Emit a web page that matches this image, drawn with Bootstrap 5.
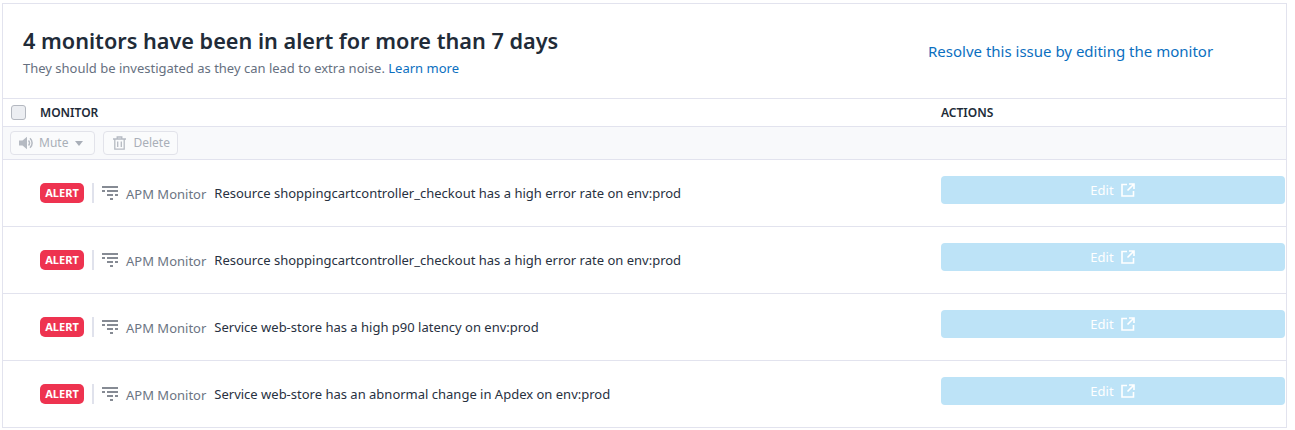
<!DOCTYPE html>
<html lang="en">
<head>
    <meta charset="UTF-8">
    <title>Monitors in alert</title>
    <link href="https://cdn.jsdelivr.net/npm/bootstrap@5.3.0/dist/css/bootstrap.min.css" rel="stylesheet">
    <style>
        body {
            font-family: "Noto Sans", sans-serif;
            font-size: 13px;
            color: #28313f;
            background: #fff;
            padding: 3px 8px 0 2px;
        }
        a { color: #0b6fbf; text-decoration: none; }
        .panel-box {
            height: 425px;
            border: 1px solid #e2e3ee;
        }
        .panel-head {
            height: 95px;
            padding: 21px 20px 0;
            border-bottom: 1px solid #e2e3ee;
        }
        .panel-head h1 {
            font-size: 21.67px;
            line-height: 32px;
            font-weight: 600;
            margin: 0;
            color: #212b38;
        }
        .panel-head p {
            margin: 2px 0 0;
            line-height: 18px;
            color: #667080;
        }
        .resolve-link {
            width: 338px;
            padding-top: 15px;
            font-size: 15px;
            line-height: 22px;
        }
        .col-first { width: 938px; flex: none; }
        .cols-row {
            height: 28px;
            border-bottom: 1px solid #e2e3ee;
            font-size: 12px;
            font-weight: 600;
            color: #212b38;
        }
        .fake-check {
            width: 15px;
            height: 15px;
            margin: 0 14px 0 8px;
            background: #eceef2;
            border: 1px solid #b4b8c0;
            border-radius: 3px;
        }
        .bulk-row {
            height: 33px;
            padding-left: 7px;
            background: #f8f9fb;
            border-bottom: 1px solid #e2e3ee;
        }
        .bulk-btn {
            height: 24px;
            font-size: 12px;
            color: #a9afb8;
            background: #fafbfc;
            border: 1px solid #e2e3ea;
            border-radius: 4px;
        }
        .btn-mute { padding: 0 11px 0 8px; }
        .btn-mute svg { margin-right: 4px; }
        .btn-delete { padding: 0 7px 0 9px; }
        .btn-delete svg { margin-right: 7px; }
        .caret-down {
            width: 0;
            height: 0;
            margin-left: 7px;
            border-left: 4.5px solid transparent;
            border-right: 4.5px solid transparent;
            border-top: 5px solid #a9afb8;
        }
        .mon-row {
            height: 67px;
            border-bottom: 1px solid #e2e3ee;
            padding-left: 37px;
        }
        .mon-row:last-child { border-bottom-color: transparent; }
        .alert-tag {
            width: 44px;
            height: 20px;
            margin-top: -1px;
            background: #ee3350;
            color: #fff;
            font-size: 11px;
            font-weight: 700;
            line-height: 20px;
            text-align: center;
            border-radius: 5px;
        }
        .tag-sep {
            width: 2px;
            height: 20px;
            margin: -1px 8px 0;
            background: #e0e2ec;
        }
        .type-icon { margin-top: -1px; }
        .mon-type { color: #6c7583; margin: 2px 8px 0; }
        .mon-cell { width: 901px; flex: none; padding-top: 1px; }
        .edit-btn {
            width: 344px;
            height: 28px;
            margin-bottom: 6px;
            padding: 2px 1px 0 0;
            color: #fff;
            background: #bde3f7;
            border: 0;
            border-radius: 4px;
            font-size: 13px;
        }
        .edit-btn svg { margin-left: 7px; margin-top: -2px; }
    </style>
</head>
<body>
    <div class="panel-box">
        <div class="panel-head d-flex justify-content-between">
            <div>
                <h1>4 monitors have been in alert for more than 7 days</h1>
                <p>They should be investigated as they can lead to extra noise. <a href="#">Learn more</a></p>
            </div>
            <div class="resolve-link"><a href="#">Resolve this issue by editing the monitor</a></div>
        </div>

        <div class="cols-row d-flex align-items-center">
            <div class="col-first d-flex align-items-center">
                <span class="fake-check"></span>
                <span>MONITOR</span>
            </div>
            <div>ACTIONS</div>
        </div>

        <div class="bulk-row d-flex align-items-center gap-2">
            <div class="bulk-btn btn-mute d-flex align-items-center">
                <svg width="16" height="14" viewBox="0 0 16 14"><path d="M0 4.5h3.5L8 .8v12.4L3.5 9.5H0z" fill="#b5bac2"/><path d="M9.5 4.5a3.5 3.5 0 0 1 0 5M11 2.2a6.5 6.5 0 0 1 0 9.6" fill="none" stroke="#b5bac2" stroke-width="1.5"/></svg>
                <span>Mute</span>
                <span class="caret-down"></span>
            </div>
            <div class="bulk-btn btn-delete d-flex align-items-center">
                <svg width="13" height="14" viewBox="0 0 13 14"><path d="M0 3h13M4.2 3V1h4.6v2M1.8 3v10.2h9.4V3M4.7 5.5v5.5M8.3 5.5v5.5" fill="none" stroke="#b5bac2" stroke-width="1.3"/></svg>
                <span>Delete</span>
            </div>
        </div>

        <div class="mon-row d-flex align-items-center">
            <div class="mon-cell d-flex align-items-center">
                <span class="alert-tag">ALERT</span><span class="tag-sep"></span>
                <svg class="type-icon" width="16" height="14" viewBox="0 0 16 14"><path d="M0 1h16M0 5h3M5 5h11M5 9h6M13 9h3M8 13h3" stroke="#5f6672" stroke-width="1.7"/></svg>
                <span class="mon-type">APM Monitor</span>
                <span>Resource shoppingcartcontroller_checkout has a high error rate on env:prod</span>
            </div>
            <button class="edit-btn btn d-flex align-items-center justify-content-center">Edit
                <svg width="14" height="14" viewBox="0 0 14 14"><path d="M6 1.5H1v11.5h11.5V8M8 1h5v5M13 1 6.5 7.5" fill="none" stroke="#fff" stroke-width="1.6"/></svg>
            </button>
        </div>
        <div class="mon-row d-flex align-items-center">
            <div class="mon-cell d-flex align-items-center">
                <span class="alert-tag">ALERT</span><span class="tag-sep"></span>
                <svg class="type-icon" width="16" height="14" viewBox="0 0 16 14"><path d="M0 1h16M0 5h3M5 5h11M5 9h6M13 9h3M8 13h3" stroke="#5f6672" stroke-width="1.7"/></svg>
                <span class="mon-type">APM Monitor</span>
                <span>Resource shoppingcartcontroller_checkout has a high error rate on env:prod</span>
            </div>
            <button class="edit-btn btn d-flex align-items-center justify-content-center">Edit
                <svg width="14" height="14" viewBox="0 0 14 14"><path d="M6 1.5H1v11.5h11.5V8M8 1h5v5M13 1 6.5 7.5" fill="none" stroke="#fff" stroke-width="1.6"/></svg>
            </button>
        </div>
        <div class="mon-row d-flex align-items-center">
            <div class="mon-cell d-flex align-items-center">
                <span class="alert-tag">ALERT</span><span class="tag-sep"></span>
                <svg class="type-icon" width="16" height="14" viewBox="0 0 16 14"><path d="M0 1h16M0 5h3M5 5h11M5 9h6M13 9h3M8 13h3" stroke="#5f6672" stroke-width="1.7"/></svg>
                <span class="mon-type">APM Monitor</span>
                <span>Service web-store has a high p90 latency on env:prod</span>
            </div>
            <button class="edit-btn btn d-flex align-items-center justify-content-center">Edit
                <svg width="14" height="14" viewBox="0 0 14 14"><path d="M6 1.5H1v11.5h11.5V8M8 1h5v5M13 1 6.5 7.5" fill="none" stroke="#fff" stroke-width="1.6"/></svg>
            </button>
        </div>
        <div class="mon-row d-flex align-items-center">
            <div class="mon-cell d-flex align-items-center">
                <span class="alert-tag">ALERT</span><span class="tag-sep"></span>
                <svg class="type-icon" width="16" height="14" viewBox="0 0 16 14"><path d="M0 1h16M0 5h3M5 5h11M5 9h6M13 9h3M8 13h3" stroke="#5f6672" stroke-width="1.7"/></svg>
                <span class="mon-type">APM Monitor</span>
                <span>Service web-store has an abnormal change in Apdex on env:prod</span>
            </div>
            <button class="edit-btn btn d-flex align-items-center justify-content-center">Edit
                <svg width="14" height="14" viewBox="0 0 14 14"><path d="M6 1.5H1v11.5h11.5V8M8 1h5v5M13 1 6.5 7.5" fill="none" stroke="#fff" stroke-width="1.6"/></svg>
            </button>
        </div>
    </div>

    <script src="https://cdn.jsdelivr.net/npm/bootstrap@5.3.0/dist/js/bootstrap.bundle.min.js"></script>
</body>
</html>
